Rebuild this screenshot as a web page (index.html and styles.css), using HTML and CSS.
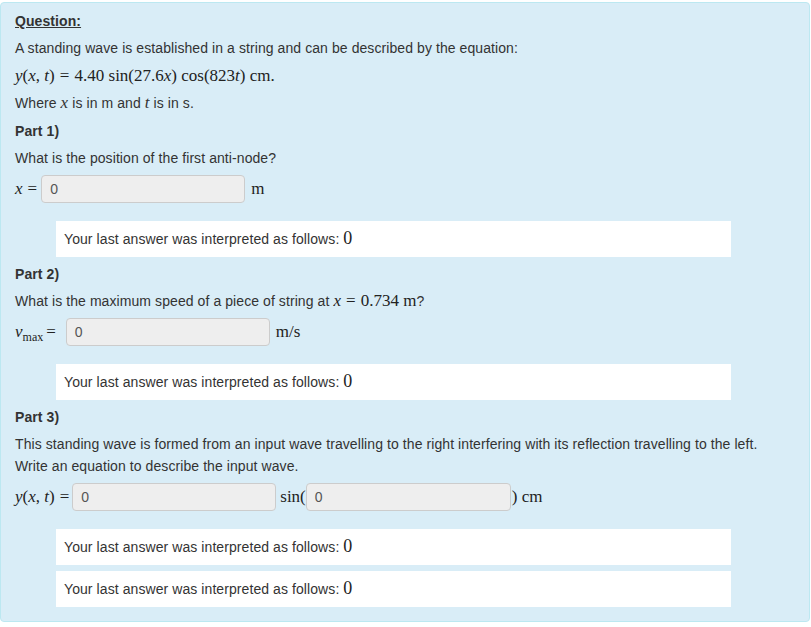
FILE: index.html
```html
<!DOCTYPE html>
<html>
<head>
<meta charset="utf-8">
<link rel="stylesheet" href="styles.css">
</head>
<body>
<div class="panel">
  <p class="qhead">Question:</p>
  <p>A standing wave is established in a string and can be described by the equation:</p>
  <p class="math eq"><i>y</i>(<i>x</i>, <i>t</i>)<span class="rel">=</span> 4.40 sin(27.6<i>x</i>) cos(823<i>t</i>) cm.</p>
  <p>Where <i class="mv">x</i> is in m and <i class="mv">t</i> is in s.</p>

  <p class="part">Part 1)</p>
  <p>What is the position of the first anti-node?</p>
  <div class="row">
    <span class="math lbl"><i>x</i><span class="rel">=</span></span>
    <span class="inp w204">0</span>
    <span class="math unit">m</span>
  </div>
  <div class="fb">Your last answer was interpreted as follows: <span class="math zero">0</span></div>

  <p class="part">Part 2)</p>
  <p>What is the maximum speed of a piece of string at <span class="math inl"><i>x</i><span class="rel">=</span> 0.734 m</span>?</p>
  <div class="row">
    <span class="math lbl lbl-v"><i>v</i><sub>max</sub><span class="rel">=</span></span>
    <span class="inp w204">0</span>
    <span class="math unit">m/s</span>
  </div>
  <div class="fb">Your last answer was interpreted as follows: <span class="math zero">0</span></div>

  <p class="part">Part 3)</p>
  <p class="two">This standing wave is formed from an input wave travelling to the right interfering with its reflection travelling to the left.<br>Write an equation to describe the input wave.</p>
  <div class="row">
    <span class="math lbl lbl-y"><i>y</i>(<i>x</i>, <i>t</i>)<span class="rel">=</span></span>
    <span class="inp w204">0</span>
    <span class="math mid">sin(</span><span class="inp w205">0</span><span class="math unit2">) cm</span>
  </div>
  <div class="fb">Your last answer was interpreted as follows: <span class="math zero">0</span></div>
  <div class="fb last">Your last answer was interpreted as follows: <span class="math zero">0</span></div>
</div>
</body>
</html>
```
FILE: styles.css
```css
html, body {
  margin: 0;
  padding: 0;
  background: #ffffff;
}
body {
  font-family: "Liberation Sans", Arial, sans-serif;
  font-size: 14px;
  letter-spacing: 0.08px;
  color: #333333;
  padding-top: 2px;
}
.panel {
  width: 810px;
  background: #d9edf7;
  border: 1px solid #bce8f1;
  border-radius: 4px;
  padding: 6.5px 14px 14px 14px;
  box-sizing: border-box;
}
p {
  margin: 0 0 5.5px 0;
  line-height: 22px;
}
.qhead {
  font-weight: bold;
  text-decoration: underline;
}
.part {
  font-weight: bold;
}
.math {
  font-family: "Liberation Serif", "Times New Roman", serif;
  font-size: 17px;
  letter-spacing: 0;
  color: #222;
}
.rel {
  margin: 0 1px 0 5px;
}
.mv {
  font-family: "Liberation Serif", serif;
  font-size: 17px;
}
.eq {
  line-height: 22px;
}
.inl {
  font-size: 17px;
}
.row {
  display: flex;
  align-items: center;
  height: 28px;
  margin-bottom: 18px;
}
.lbl {
  margin-right: 4px;
  white-space: nowrap;
}
.lbl .rel {
  margin: 0 0 0 5px;
}
.lbl-v {
  margin-right: 10px;
}
.lbl-v .rel {
  margin-left: 3px;
}
.lbl-y .rel {
  margin-left: 5px;
}
.lbl-y {
  margin-right: 3px;
}
.lbl sub {
  font-size: 12px;
  vertical-align: -4px;
  line-height: 0;
}
.inp {
  display: flex;
  align-items: center;
  height: 28px;
  box-sizing: border-box;
  background: #eeeeee;
  border: 1px solid #cccccc;
  border-radius: 4px;
  padding-left: 8px;
  font-size: 14px;
  color: #555;
}
.w204 { width: 204px; }
.w205 { width: 205px; }
.unit { margin-left: 6px; }
.mid { margin-left: 4px; }
.unit2 { margin-left: 1px; }
.fb {
  margin-left: 41px;
  width: 675px;
  height: 36px;
  background: #ffffff;
  display: flex;
  align-items: center;
  padding-left: 8px;
  box-sizing: border-box;
  margin-bottom: 6px;
}
.fb .zero {
  margin-left: 4px;
  font-size: 18px;
}
.fb.last { margin-bottom: 0; }
.two { margin-bottom: 5.5px; }
```
